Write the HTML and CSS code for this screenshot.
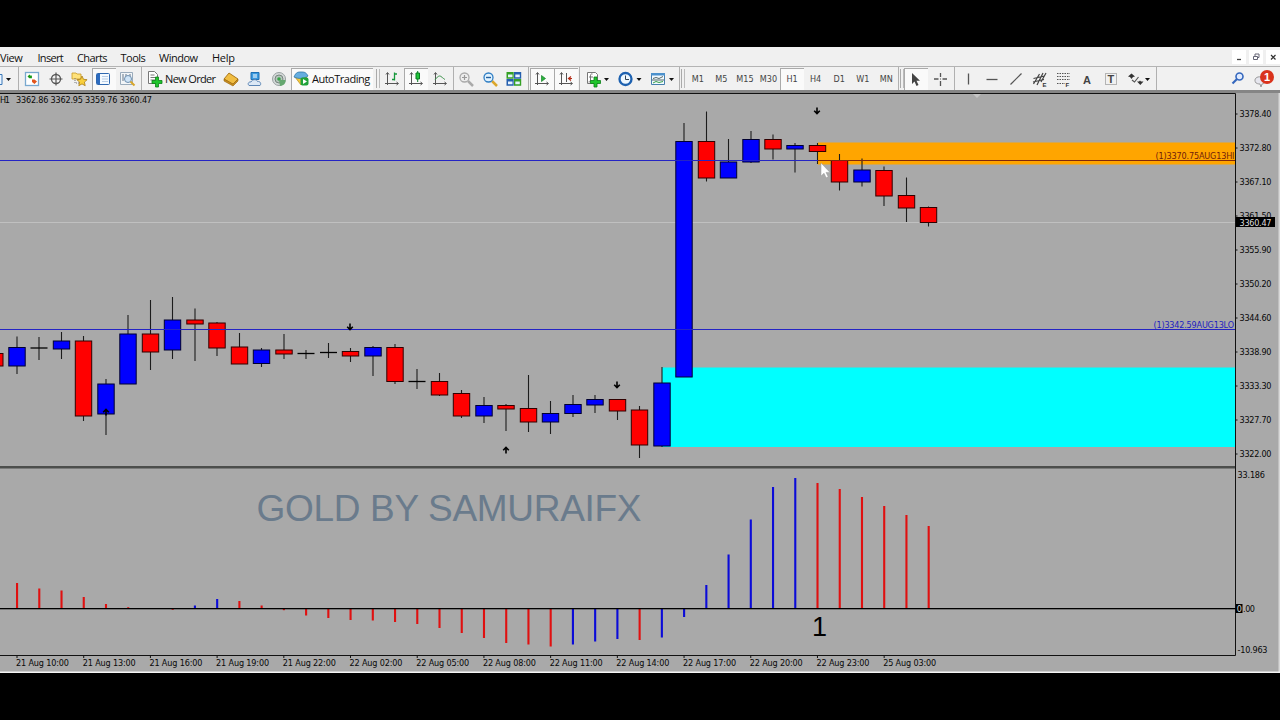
FILE: index.html
```html
<!DOCTYPE html>
<html lang="en">
<head>
<meta charset="utf-8">
<title>GOLD H1</title>
<link rel="stylesheet" href="styles.css">
</head>
<body>
<div class="win">
  <div class="menu">
    <span class="m1">View</span><span class="m2">Insert</span><span class="m3">Charts</span><span class="m4">Tools</span><span class="m5">Window</span><span class="m6">Help</span>
    <div class="ctl">
      <svg width="14" height="14"><path d="M5 9.500h4" stroke="#444" stroke-width="1.300"/></svg>
      <svg width="14" height="14"><path d="M4.500 6.500h4v3h-4zM6 6v-2h4v3.500h-1" fill="none" stroke="#667"/></svg>
      <svg width="14" height="14"><path d="M5 5l4.500 4.500M9.500 5l-4.500 4.500" stroke="#333" stroke-width="1.200"/></svg>
    </div>
  </div>
  <div class="bar">
    <div class="grp g1">
      <svg width="18" height="22"><path d="M-3 6.500h5v10h-5" fill="#eaf4ff" stroke="#3a78b8"/><path d="M6 10h5l-2.500 3z" fill="#111"/></svg>
    </div>
    <div class="grp g2">
      <svg width="24" height="22"><rect x="5.500" y="4.500" width="13" height="13" fill="#fff" stroke="#79a9cf" stroke-width="1.300"/><path d="M7.500 8.500l2-2 1.200 1.200 1.200-.2v2.800h-2.600z" fill="#189a18"/><path d="M12 11.500h2.500l2.500 2-2.500 2.500-2.500-2z" fill="#e2551c"/></svg>
      <svg width="24" height="22"><circle cx="12" cy="11" r="4.500" fill="none" stroke="#555" stroke-width="1.300"/><path d="M12 4.500v13M5.500 11h13" stroke="#555" stroke-width="1.200"/></svg>
      <svg width="24" height="22"><path d="M4 5h4l1 1h4v5h-9z" fill="#ffe27a" stroke="#c79a26" stroke-width=".8"/><path d="M7 10v5h4" fill="none" stroke="#777" stroke-dasharray="1 1"/><path d="M14 8l1.500 3.300 3.600.4-2.700 2.400.8 3.600-3.200-1.800-3.200 1.800.8-3.600-2.700-2.400 3.600-.4z" fill="#f8cf3c" stroke="#a87b16" stroke-width=".8"/></svg>
      <svg class="on" width="24" height="22"><rect x="4.500" y="5.500" width="13" height="11" rx="1" fill="#f4faff" stroke="#2f68b0"/><path d="M5 6h3v10h-3z" fill="#2d6cc0"/><path d="M10 8.500h6M10 11h6M10 13.500h6" stroke="#b8cde6"/></svg>
      <svg width="24" height="22"><path d="M4.500 4.500h12v12h-12z" fill="#f2f5f8" stroke="#9aabbb"/><path d="M7 6v7M10 6v4M14 6v3" stroke="#678"/><circle cx="12" cy="11" r="3.500" fill="#cfe4f7" stroke="#6e8faf"/><path d="M14.500 13.500l4 4" stroke="#d8a62a" stroke-width="2"/></svg>
    </div>
    <div class="grp g3">
      <div class="new">
        <svg width="22" height="22"><path d="M6.500 3.500h6l3 3v9h-9z" fill="#fff" stroke="#777"/><path d="M8.500 7h4M8.500 9.500h5M8.500 12h5" stroke="#777"/><path d="M13.500 9h3v3.500h3.500v3h-3.500v3.500h-3v-3.500h-3.500v-3h3.500z" fill="#1fc52c" stroke="#0b7f16" stroke-width=".8"/></svg>
        <span>New Order</span>
      </div>
      <svg width="24" height="22"><path d="M5 11l5-6 9 6-5 5.500z" fill="#f0bd42" stroke="#a36e12" stroke-width=".9"/><path d="M5 11v2l9 5 5-5v-2l-5 5z" fill="#c98d1e" stroke="#96640f" stroke-width=".6"/></svg>
      <svg width="24" height="22"><path d="M8 4.500h8v7h-8z" fill="#3c9be0" stroke="#1d6fb4"/><path d="M10 7h4M10 9h4" stroke="#fff"/><path d="M6 17.500c-2-2 0-4 2-3.500 1-3 6-3 6.500-.5 3-.5 4 2.500 2.500 4z" fill="#dce8f5" stroke="#5d86b5"/></svg>
      <svg width="24" height="22"><circle cx="12" cy="11" r="6.500" fill="#d5d9d9" stroke="#99a2a2"/><circle cx="12" cy="11" r="4" fill="#b6c4bd" stroke="#77877e"/><circle cx="12" cy="11" r="1.800" fill="#36a446"/><path d="M12 12l1 6c4-.5 6-3 5.500-6" fill="#65a870"/></svg>
      <div class="auto on">
        <svg width="20" height="22"><path d="M4 9l6 8 6-8z" fill="#f2c83d" stroke="#b88d16" stroke-width=".7"/><path d="M3 9c2-5 4-5 7-5s5 0 7 4c-4 3-10 3-14 1z" fill="#65aee0" stroke="#2e76aa" stroke-width=".8"/><rect x="9.500" y="9.500" width="8" height="8" rx="2" fill="#20a33a"/><path d="M12 11v5l4-2.500z" fill="#fff"/></svg>
        <span>AutoTrading</span>
      </div>
    </div>
    <div class="grip"></div>
    <div class="grp g4">
      <svg width="24" height="22"><path d="M7.500 5v12M5 15.500h13" stroke="#555" fill="none"/><path d="M6 6.500l1.500-2 1.500 2M16.500 14l2 1.500-2 1.500" stroke="#555" fill="none"/><path d="M14.500 4.500v8M12 11.500h2.500M14.500 6h2.500" stroke="#15973a" stroke-width="1.300"/></svg>
      <svg class="on" width="24" height="22"><path d="M7.500 5v12M5 15.500h13" stroke="#555" fill="none"/><path d="M6 6.500l1.500-2 1.500 2M16.500 14l2 1.500-2 1.500" stroke="#555" fill="none"/><path d="M13.700 3v11" stroke="#087d22"/><path d="M12 5h3.500v6h-3.500z" fill="#20c43a" stroke="#087d22"/></svg>
      <svg width="24" height="22"><path d="M7.500 5v12M5 15.500h13" stroke="#555" fill="none"/><path d="M6 6.500l1.500-2 1.500 2M16.500 14l2 1.500-2 1.500" stroke="#555" fill="none"/><path d="M7 12c2-3 4-5 6-3.500s3 2.500 4 3" stroke="#3b914a" fill="none"/></svg>
    </div>
    <div class="grp g5">
      <svg width="24" height="22"><path d="M14 13l5 5" stroke="#aaa" stroke-width="2.500"/><circle cx="10.500" cy="9.500" r="4.500" fill="#eee" stroke="#aaa" stroke-width="1.300"/><path d="M8 9.500h5M10.500 7v5" stroke="#999" stroke-width="1.200"/></svg>
      <svg width="24" height="22"><path d="M14 13l5 5" stroke="#dba72c" stroke-width="2.500"/><circle cx="10.500" cy="9.500" r="4.500" fill="#e1f3ff" stroke="#2f7ec4" stroke-width="1.300"/><path d="M8 9.500h5" stroke="#2360a0" stroke-width="1.400"/></svg>
      <svg width="24" height="22"><path d="M4.500 4h7.200v6.700h-7.200zM12 11h7.200v6.700h-7.200z" fill="#35a024"/><path d="M12 4h7.200v6.700h-7.200zM4.500 11h7.200v6.700h-7.200z" fill="#255fae"/><path d="M6 6.500h4.500v2.700h-4.500zM13.300 6.500h4.500v2.700h-4.500zM6 13.500h4.500v2.700h-4.500zM13.300 13.500h4.500v2.700h-4.500z" fill="#e7f3ff"/></svg>
    </div>
    <div class="grp g6">
      <svg class="on" width="24" height="22"><path d="M7.500 5v12M5 15.500h13" stroke="#555" fill="none"/><path d="M6 6.500l1.500-2 1.500 2M16.500 14l2 1.500-2 1.500" stroke="#555" fill="none"/><path d="M11.500 7.500v6l4-3z" fill="#29b13c" stroke="#168128" stroke-width=".7"/></svg>
      <svg class="on" width="24" height="22"><path d="M7.500 5v12M5 15.500h13M12.500 5v9" stroke="#555" fill="none"/><path d="M6 6.500l1.500-2 1.500 2M16.500 14l2 1.500-2 1.500" stroke="#555" fill="none"/><path d="M18 10.500h-3M17 8.500l-2.500 2 2.500 2" fill="none" stroke="#b52b16" stroke-width="1.200"/></svg>
    </div>
    <div class="grp g7">
      <svg width="33" height="22"><path d="M7.500 4.500h8l2 2v9h-10z" fill="#fff" stroke="#777"/><path d="M12.500 6c-2-.5-2 1-2 2v4c0 2-1 2-2 2M9 9h4" fill="none" stroke="#777"/><path d="M14 9h3v3.500h3.500v3h-3.500v3.500h-3v-3.500h-3.500v-3h3.500z" fill="#1fc52c" stroke="#0b7f16" stroke-width=".8"/><path d="M24 10h5l-2.500 3z" fill="#111"/></svg>
      <svg width="33" height="22"><circle cx="12.500" cy="11" r="6" fill="#eef8ff" stroke="#1d61b0" stroke-width="2.300"/><path d="M12.500 7.500v4h3.500" fill="none" stroke="#345"/><path d="M23.500 10h5l-2.500 3z" fill="#111"/></svg>
      <svg width="33" height="22"><path d="M5.500 5.500h13v11h-13z" fill="#f2faff" stroke="#477fad"/><path d="M5 5h14v2.500h-14z" fill="#4c91cc"/><path d="M7 10.500l3-1 3 1 4-2M6 12h12" stroke="#566" fill="none"/><path d="M7 15l3-1.500 3 1 4-1" stroke="#36a048" fill="none"/><path d="M23 10h5l-2.500 3z" fill="#111"/></svg>
    </div>
    <div class="grip"></div>
    <div class="grp g8">
      <span>M1</span><span>M5</span><span>M15</span><span>M30</span><span class="on">H1</span><span>H4</span><span>D1</span><span>W1</span><span>MN</span>
    </div>
    <div class="grip"></div>
    <div class="grp g9">
      <svg class="on" width="24" height="22"><path d="M8 5v11l2.500-2.500 2 4.500 2-1-2-4.200h3.500z" fill="#444"/></svg>
      <svg width="24" height="22"><path d="M12.500 5v4M12.500 13v5M6 11h4.500M14.500 11h4.500" stroke="#555" stroke-width="1.300"/><path d="M12 10.500h1v1h-1z" fill="#555"/></svg>
    </div>
    <div class="grp g10">
      <svg width="24" height="22"><path d="M12.500 5.500v11" stroke="#555" stroke-width="1.300"/></svg>
      <svg width="24" height="22"><path d="M6.500 11.500h11" stroke="#555" stroke-width="1.300"/></svg>
      <svg width="24" height="22"><path d="M6.500 16.500l11-11" stroke="#555" stroke-width="1.200"/></svg>
      <svg width="24" height="22"><path d="M5.500 16l6-10M9 17l6-12M5.500 10.500l11-2.500M5 14l11-2.500M13 14l5-9" stroke="#444" stroke-width="1.200"/><text x="14.500" y="18.500" class="ic">E</text></svg>
      <svg width="24" height="22"><path d="M6 5.500h13M6 8.500h13M6 11.500h13M6 15.500h8" stroke="#555" stroke-dasharray="1.500 1"/><text x="14.500" y="18.500" class="ic">F</text></svg>
      <svg width="24" height="22"><text x="8" y="15.500" class="ia">A</text></svg>
      <svg width="24" height="22"><path d="M6.500 5.500h11v11h-11z" fill="none" stroke="#777" stroke-dasharray="1 1"/><text x="8.500" y="15" class="ia">T</text></svg>
      <svg width="34" height="22"><path d="M5 8.500l3.500-3 3.500 3-2 .5-1.500 2-1.500-2zM14 13.500h2l1-1 1 1h2.500l-3.200 3.500z" fill="#333"/><path d="M9 12l2.500 2 4-5" fill="none" stroke="#555" stroke-width="1.200"/><path d="M22 10h5l-2.500 3z" fill="#111"/></svg>
    </div>
    <div class="right">
      <svg width="24" height="22"><circle cx="13.500" cy="8.500" r="3.500" fill="#dfeaff" stroke="#3467bd" stroke-width="1.600"/><path d="M11 11l-4.500 4.500" stroke="#3467bd" stroke-width="2.200"/></svg>
      <svg width="28" height="22"><path d="M4 15c-3-4 1-7 5-6s5 7 1 7l-1 3-1-3c-2 0-3-.5-4-1z" fill="#e6e6ee" stroke="#999"/><circle cx="15" cy="9" r="7" fill="#d9321c"/><text x="12" y="13" class="bd">1</text></svg>
    </div>
  </div>
  <svg class="chart" id="chart" width="1280" height="583" viewBox="0 90 1280 583">
    <rect x="0" y="90" width="1280" height="3" fill="#858585"/>
    <path d="M0 93.500H1235.500V655.500H0" class="ax"/>
    <path d="M973 94h8l-4 4z" fill="#c4c4c4"/>
    <rect x="0" y="466" width="1235" height="2.500" fill="#4c4e4c"/>
    <path d="M0 222.500H1235" stroke="#c0c0c0"/>
    <rect x="818" y="142.500" width="417" height="22" fill="#ffa500"/>
    <rect x="662" y="367.500" width="573" height="79.500" fill="#00ffff"/>
    <g id="candles"></g>
    <rect x="0" y="160" width="818" height="1" fill="#2424c4"/>
    <rect x="0" y="329" width="1235" height="1" fill="#2424c4"/>
    <path d="M818 160.500H1235" stroke="#80280c"/>
    <g id="arrows"></g>
    <text x="256.500" y="521" textLength="385" class="wm">GOLD BY SAMURAIFX</text>
    <g id="bars"></g>
    <rect x="0" y="608" width="1238" height="1.300" fill="#000"/>
    <text x="812" y="636" class="one">1</text>
    <text x="0" y="103.300" textLength="10" class="t">H1</text>
    <text x="16" y="103.300" textLength="136" class="t">3362.86 3362.95 3359.76 3360.47</text>
    <text x="1155.500" y="159" textLength="79" class="t hi">(1)3370.75AUG13HI</text>
    <text x="1153.500" y="328" textLength="80.500" class="t lo">(1)3342.59AUG13LO</text>
    <g id="scale"></g>
    <rect x="1236" y="217" width="39" height="10" fill="#000"/>
    <text x="1239.500" y="225.500" textLength="32" class="t cur">3360.47</text>
    <text x="1237.500" y="478" textLength="27.500" class="t">33.186</text>
    <text x="1243" y="612" textLength="12" class="t">.00</text>
    <rect x="1236" y="604" width="6.500" height="9" fill="#000"/>
    <text x="1236.700" y="612" class="t cur">0</text>
    <text x="1237.500" y="653" textLength="30" class="t">-10.963</text>
    <path d="M821 163v13l3-2.800 2.200 4.600 2-1-2.200-4.400h4z" fill="#fff" stroke="#999" stroke-width=".5"/>
    <rect x="1278.500" y="93" width="1.500" height="579" fill="#d8d8d8"/>
    <rect x="0" y="671.500" width="1280" height="1.500" fill="#f4f4f4"/>
  </svg>
</div>
<script src="chart.js"></script>
</body>
</html>
```

FILE: styles.css
```css
html, body { margin:0; padding:0; background:#000; }
body { padding-top:47px; height:626px; overflow:hidden; font-family:"Open Sans", "Noto Sans", sans-serif; color:#111; }
svg { display:block; flex:none; }
.win { width:1280px; height:626px; background:#f0f0f0; }

.menu { display:flex; align-items:center; height:20px; padding-top:1px; font-size:11px; letter-spacing:-.25px; border-bottom:1px solid #b4b4b4; box-sizing:border-box; }
.menu span { flex:none; white-space:nowrap; }
.m1 { width:37.5px; }
.m2 { width:39.5px; }
.m3 { width:43.5px; }
.m4 { width:38.5px; }
.m5 { width:53px; }
.m6 { width:30px; }
.menu .m1 { letter-spacing:-.4px; }
.menu .m2 { letter-spacing:-.7px; }
.menu .m3 { letter-spacing:-.6px; }
.menu .m4 { letter-spacing:-.5px; }
.menu .m5 { letter-spacing:-.5px; }
.ctl { display:flex; gap:3px; margin-left:auto; }
.ctl svg { background:#fff; }

.bar { display:flex; height:23px; font-size:11px; background:#f1f1f1; }
.grp { display:flex; flex:none; box-sizing:border-box; border-right:1px solid #b0b0b0; height:23px; padding-top:1px; }
.g1 { width:19px; }
.g2 { width:123px; padding-left:1px; }
.g3 { width:233px; border-right:0; }
.g4 { width:74px; }
.g5 { width:75px; }
.g6 { width:51px; padding-left:1px; }
.g7 { width:100px; }
.g8 { width:214px; padding-left:1px; }
.g9 { width:51px; }
.g10 { width:202px; padding-left:1px; }
.g10 svg { margin-right:-.15px; }
.grip { flex:none; box-sizing:border-box; width:4px; height:19px; margin:2px 0 0 1px; border-left:1px solid #aaa; border-right:1px solid #bbb; }
.on { background:#fafafa; box-shadow:inset 1px 1px 0 #aaa; }
.new, .auto { display:flex; align-items:center; white-space:nowrap; letter-spacing:-.65px; }
.new { width:77px; }
.new span { margin:-2px 0 0 1px; }
.auto { width:82px; letter-spacing:-.5px; }
.auto span { margin:-2px 0 0 1px; }
.g8 span { width:23.6px; height:22px; text-align:center; font:9px/23px "DejaVu Sans Condensed", "DejaVu Sans", sans-serif; color:#444; }
.right { display:flex; margin-left:auto; padding-top:1px; }
.right svg + svg { margin-left:2px; }

.ic { font:bold 6px "Liberation Sans", sans-serif; fill:#333; }
.ia { font:bold 11px "Liberation Sans", sans-serif; fill:#444; }
.bd { font:bold 11px "Liberation Sans", sans-serif; fill:#fff; }

.chart { background:#a9a9a9; }
.ax { fill:none; stroke:#111; }
.t { font:9px "DejaVu Sans Condensed", "DejaVu Sans", sans-serif; fill:#080808; }
.hi { fill:#70200c; }
.lo { fill:#1c1cc0; }
.cur { fill:#ddd; }
.wm { font:37px "Liberation Sans", sans-serif; fill:#6a7b8c; }
.one { font:27px "Liberation Sans", sans-serif; fill:#000; }
.wick { stroke:#1c1c1c; stroke-width:1.1; }
.up { fill:#0000ff; stroke:#000030; }
.dn { fill:#ff0000; stroke:#300000; }
.doji { stroke:#000; stroke-width:1.3; }
.bup { fill:#0b0bd8; }
.bdn { fill:#e01010; }
.arr { fill:none; stroke:#000; stroke-width:1.6; }
```

FILE: chart.js
```js
var X0 = 17, STEP = 22.235;
// high, top, bottom, low, direction
var candles = [
	[336.5, 347.5, 366, 374, 1], [337, 348, 348, 360, 0], [332, 341, 349, 359, 1], [336, 341, 416, 421, -1],
	[379, 384, 414, 435, 1], [315, 334, 384, 384, 1], [300, 334, 352, 370, -1], [297, 320, 350, 359, 1],
	[308.5, 320, 324, 361, -1], [322, 323, 348, 356, -1], [333, 347, 364, 364, -1], [348, 350, 363.5, 367, 1],
	[334, 350, 354, 359, -1], [350, 353.5, 353.5, 359, 0], [343, 352.5, 352.5, 358, 0], [348, 351.5, 356, 362, -1],
	[346, 347.5, 356, 376, 1], [344, 347.5, 381.5, 384, -1], [369, 381.5, 381.5, 389, 0], [373, 381.5, 395, 396, -1],
	[390, 393.5, 416, 418, -1], [397, 405.5, 416, 423, 1], [404, 405.5, 409, 431, -1], [375, 408.5, 422, 432, -1],
	[401, 413.5, 422, 434, 1], [395, 404.5, 413.5, 417, 1], [395, 399.5, 405, 413, 1], [399, 399.5, 411, 420, -1],
	[406, 410, 445, 458, -1], [367, 383, 446, 447, 1], [123, 141.5, 377, 377, 1], [111.5, 141.5, 178, 181.5, -1],
	[139, 162, 178, 178, 1], [131, 139.5, 162, 163, 1], [134.5, 139.5, 149, 159.5, -1], [143, 145.5, 149, 172.5, 1],
	[143, 145.5, 151.5, 164, -1], [154, 160.5, 182, 190.5, -1], [158.5, 170, 182, 186.5, 1], [166.5, 170.5, 196, 206, -1],
	[177.5, 195.5, 208, 222, -1], [206.5, 207.5, 222.5, 226.5, -1]
];
// histogram ends, indexes listed in "blue" are painted blue
var hist = [583, 588.5, 590.5, 597, 604, 607.2, 608, 609.8, 605.5, 599, 601, 605.5, 610.2, 615.5, 618, 620, 620.5, 622, 624, 628, 633, 638,
	643, 644.5, 646.5, 644.5, 641.5, 639, 640, 637.5, 617, 585, 554.5, 519.5, 487, 478, 483, 489, 497, 506, 515, 526];
var blue = [8, 9, 25, 26, 27, 29, 30, 31, 32, 33, 34, 35];
var prices = ["3378.40", "3372.80", "3367.10", "3361.50", "3355.90", "3350.20", "3344.60", "3338.90", "3333.30", "3327.70", "3322.00"];
var dates = ["21 Aug 10:00", "21 Aug 13:00", "21 Aug 16:00", "21 Aug 19:00", "21 Aug 22:00", "22 Aug 02:00", "22 Aug 05:00",
	"22 Aug 08:00", "22 Aug 11:00", "22 Aug 14:00", "22 Aug 17:00", "22 Aug 20:00", "22 Aug 23:00", "25 Aug 03:00"];
var arrows = [[350, 327, 1], [617, 385, 1], [817, 111, 1], [506, 450, -1], [106, 412, -1]];

function $(o) {
	return document.getElementById(o);
}

function line(x1, y1, x2, y2, c) {
	return '<path class="' + c + '" d="M' + x1 + ' ' + y1 + 'L' + x2 + ' ' + y2 + '"/>';
}

function drawCandles() {
	var s = '<rect class="dn" x="-14" y="353.5" width="17" height="12.5"/>';
	for (var i = 0; i < candles.length; i++) {
		var c = candles[i];
		var x = Math.round((X0 + i * STEP) * 2) / 2;
		s += line(x, c[0], x, c[3], "wick");
		if (c[4] == 0) {
			s += line(x - 8.5, c[1], x + 8.5, c[1], "doji");
		} else {
			s += '<rect class="' + (c[4] > 0 ? "up" : "dn") + '" x="' + (x - 8.2) + '" y="' + c[1] + '" width="16.4" height="' + (c[2] - c[1]) + '"/>';
		}
	}
	$("candles").innerHTML = s;
}

function drawBars() {
	var s = "";
	for (var i = 0; i < hist.length; i++) {
		var y = Math.min(hist[i], 608.5);
		var h = Math.abs(hist[i] - 608.5);
		s += '<rect class="' + (blue.indexOf(i) >= 0 ? "bup" : "bdn") + '" x="' + (X0 + i * STEP - 1) + '" y="' + y + '" width="2.1" height="' + h + '"/>';
	}
	$("bars").innerHTML = s;
}

function drawScale() {
	var s = "";
	for (var i = 0; i < prices.length; i++) {
		var y = 114 + i * 34;
		s += line(1235, y, 1237.5, y, "ax");
		s += '<text class="t" x="1239.5" y="' + (y + 3.4) + '" textLength="32">' + prices[i] + '</text>';
	}
	for (var j = 0; j < dates.length; j++) {
		var x = X0 + j * STEP * 3;
		s += line(x, 655, x, 658, "ax");
		s += '<text class="t" x="' + (x - 1) + '" y="666.4" textLength="53">' + dates[j] + '</text>';
	}
	$("scale").innerHTML = s;
}

function drawArrows() {
	var s = "";
	for (var i = 0; i < arrows.length; i++) {
		var a = arrows[i], d = a[2];
		s += '<path class="arr" d="M' + a[0] + ' ' + (a[1] - 3.5 * d) + 'v' + 6 * d + 'M' + (a[0] - 2.8) + ' ' + (a[1] - 0.3 * d) + 'l2.8 ' + 2.8 * d + 'l2.8 ' + -2.8 * d + '"/>';
	}
	$("arrows").innerHTML = s;
}

drawCandles();
drawBars();
drawScale();
drawArrows();
```
